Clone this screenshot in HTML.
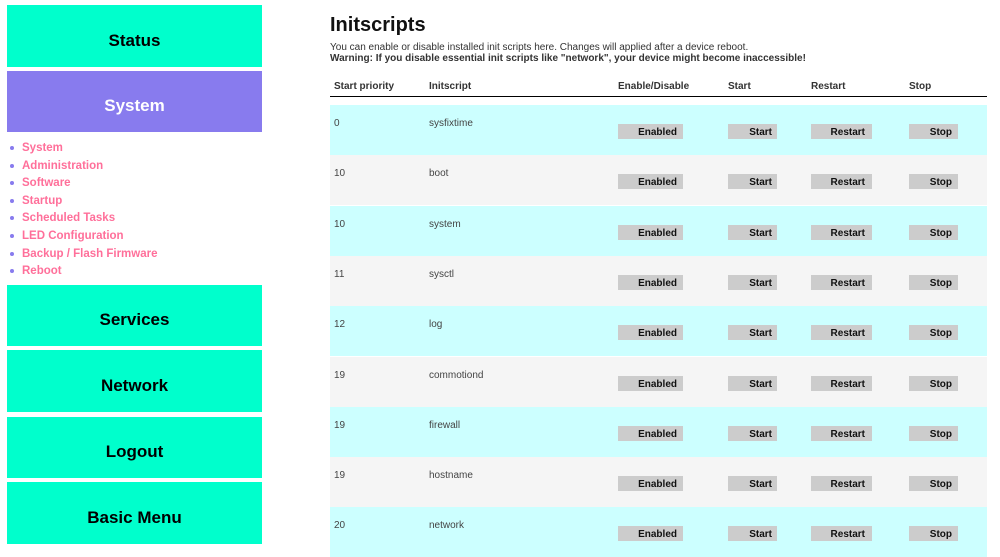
<!DOCTYPE html>
<html><head><meta charset="utf-8"><style>
*{margin:0;padding:0;box-sizing:border-box}
body{width:1000px;height:554px;overflow:hidden;background:#fff;font-family:"Liberation Sans",sans-serif;position:relative}
.nav{position:absolute;left:7px;width:255px;background:#00ffcc;color:#000;font-weight:bold;font-size:17px;text-align:center;display:flex;align-items:center;justify-content:center;padding-top:9px}
.sys{background:#887bee;color:#fff}
ul{position:absolute;left:7px;top:141px;list-style:none}
li{font-size:11.5px;font-weight:bold;color:#ff6f9a;height:17.6px;line-height:14px;padding-left:15px;position:relative}
li:before{content:"";position:absolute;left:3px;top:5px;width:4px;height:4px;border-radius:50%;background:#887bee}
h1{position:absolute;left:330px;top:14px;font-size:20px;font-weight:bold;color:#111}
.desc{position:absolute;left:330px;top:42px;font-size:10px;color:#333;line-height:11px}
.hdr{position:absolute;top:81px;font-size:10px;font-weight:bold;color:#333}
.line{position:absolute;left:330px;top:96px;width:657px;height:1px;background:#000}
.row{position:absolute;left:330px;width:657px;height:50px}
.t{position:absolute;top:13px;font-size:10px;color:#444}
.b{position:absolute;top:19px;height:15px;background:#ccc;font-size:10px;font-weight:bold;color:#111;text-align:right;line-height:17px}
</style></head><body>
<div class="nav" style="top:5px;height:62px">Status</div>
<div class="nav sys" style="top:71px;height:61px">System</div>
<ul><li>System</li><li>Administration</li><li>Software</li><li>Startup</li><li>Scheduled Tasks</li><li>LED Configuration</li><li>Backup / Flash Firmware</li><li>Reboot</li></ul>
<div class="nav" style="top:285px;height:61px">Services</div>
<div class="nav" style="top:350px;height:62px">Network</div>
<div class="nav" style="top:417px;height:61px">Logout</div>
<div class="nav" style="top:482px;height:62px">Basic Menu</div>
<h1>Initscripts</h1>
<div class="desc">You can enable or disable installed init scripts here. Changes will applied after a device reboot.<br><b>Warning: If you disable essential init scripts like "network", your device might become inaccessible!</b></div>
<div class="hdr" style="left:334px">Start priority</div>
<div class="hdr" style="left:429px">Initscript</div>
<div class="hdr" style="left:618px">Enable/Disable</div>
<div class="hdr" style="left:728px">Start</div>
<div class="hdr" style="left:811px">Restart</div>
<div class="hdr" style="left:909px">Stop</div>
<div class="line"></div>
<div id="rows"></div>
<script>
var d=[["0","sysfixtime"],["10","boot"],["10","system"],["11","sysctl"],["12","log"],["19","commotiond"],["19","firewall"],["19","hostname"],["20","network"]];
var h="";
d.forEach(function(r,i){
h+='<div class="row" style="top:'+(105+i*50.3)+'px;background:'+(i%2?'#f5f5f5':'#ccffff')+'">'+
'<div class="t" style="left:4px">'+r[0]+'</div><div class="t" style="left:99px">'+r[1]+'</div>'+
'<div class="b" style="left:288px;width:65px;padding-right:6px">Enabled</div>'+
'<div class="b" style="left:398px;width:49px;padding-right:5px">Start</div>'+
'<div class="b" style="left:481px;width:61px;padding-right:7px">Restart</div>'+
'<div class="b" style="left:579px;width:49px;padding-right:6px">Stop</div></div>';});
document.getElementById("rows").innerHTML=h;
</script>
</body></html>
